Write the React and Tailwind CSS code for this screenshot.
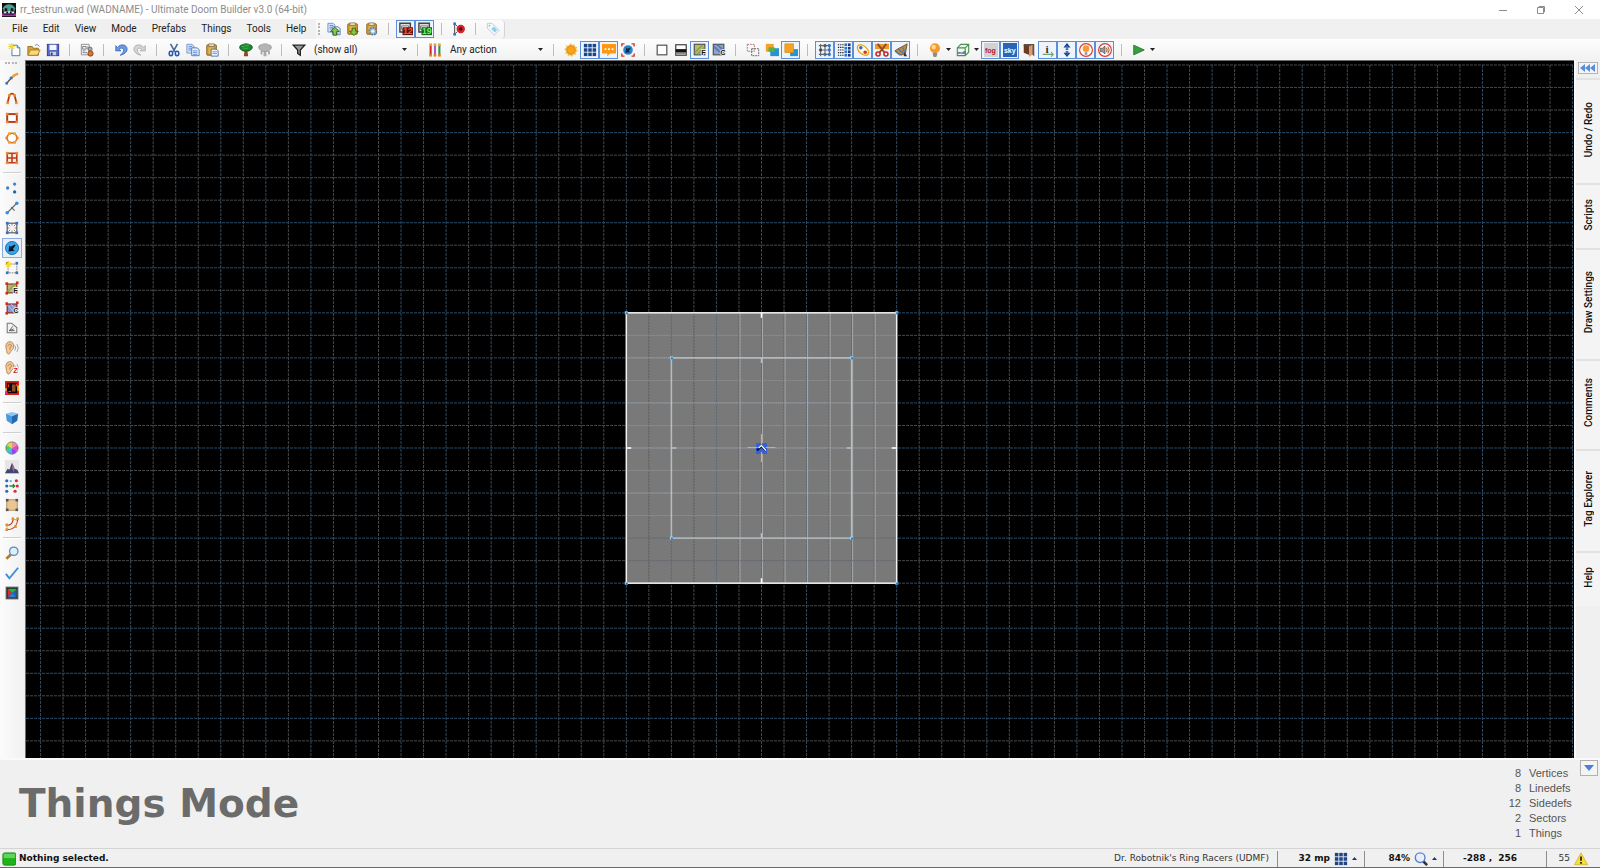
import { Fragment } from "react"

const dot = (x, y, c = "#2f74c8") => <rect key={x + "-" + y} x={x - 1.5} y={y - 1.5} width="3" height="3" fill={c} />

const corners = (c) => [dot(2.5, 2.5, c), dot(13.5, 2.5, c), dot(2.5, 13.5, c), dot(13.5, 13.5, c)]

const letters = "font-['Liberation_Sans',sans-serif] font-bold"

// small letter in the lower right corner of an icon
const mark = (letter, color = "#111") => (
  <text x="9.500" y="14" fontSize="8.500" fill={color} stroke="#fff" strokeWidth="1.500" paintOrder="stroke" className={letters}>
    {letter}
  </text>
)

const clipboard = (
  <>
    <rect x="2" y="2" width="11" height="12" rx="1" fill="#d29a34" stroke="#8a5e14" />
    <path d="M4 5h6v7H4z" fill="#e2b558" />
    <rect x="4.500" y="1" width="6" height="3" fill="#e8dcb8" stroke="#6b6250" strokeWidth=".7" />
  </>
)

const pages = (
  <>
    <path d="M1 1.500h6l2 2v8H1z" fill="#cfe0f8" stroke="#6d92c8" />
    <path d="M6.500 5.500h6l2.500 2v7H6.500z" fill="#e6f0ff" stroke="#4373b8" />
    <path d="M3 4h4M3 6h3M3 8h3M8 9h5M8 11h5M8 13h5" stroke="#5f8cd0" />
  </>
)

const ear = (
  <>
    <path d="M1 6c0-7 9-7 9 0 0 4-3 4-4 7-1 3-4 2-4-1C2 10 1 9 1 6z" fill="#f3cb9a" stroke="#a87440" strokeWidth=".9" />
    <path d="M3.500 6c0-3 4-3 4 0-1 0-2 1-2 4" fill="none" stroke="#a87440" />
    <path d="M11 5c1.500 2 1.500 4 0 6M13.500 3.500c2 3 2 6 0 9" fill="none" stroke="#999" />
  </>
)

const icons = {
  app: (
    <>
      <rect width="16" height="16" fill="#111" />
      <path d="M1 6c3-6 11-6 14 0l-1 4H2z" fill="#4c9e90" />
      <path d="M3 6h3v3H3zM10 6h3v3h-3z" fill="#15151f" />
      <path d="M2 10h3v2H2zM7 9h2v3H7zM11 10h3v2h-3z" fill="#c9e9e2" />
      <path d="M0 12h16v3H0z" fill="#c02ba8" />
      <path d="M2 13h12" stroke="#41104e" />
    </>
  ),
  file: (
    <>
      <path d="M4.500 2.500h6l3 3v9h-9z" fill="#fff" stroke="#3c6ea8" />
      <path d="M10.500 2.500v3h3" fill="#cfe0f4" stroke="#3c6ea8" />
      <path d="M4 0v8M0 4h8M1 1l6 6M7 1L1 7" stroke="#f6d838" strokeWidth="1.300" />
    </>
  ),
  open: (
    <>
      <path d="M1 14V4h5l1 2h6v8z" fill="#d9a33a" stroke="#946a18" />
      <path d="M1 14l3-6h11l-3 6z" fill="#fbd97c" stroke="#a87c22" />
      <path d="M9 3c2-2 4-1 5 1" fill="none" stroke="#4478b8" />
    </>
  ),
  save: (
    <>
      <rect x="1.500" y="1.500" width="13" height="13" fill="#5a68cc" stroke="#27388c" />
      <rect x="4" y="2" width="8" height="6" fill="#f4f7ff" />
      <rect x="4.500" y="10" width="7" height="4" fill="#c9d0dd" />
      <rect x="5.500" y="11" width="2" height="3" fill="#27388c" />
    </>
  ),
  mapOptions: (
    <>
      <path d="M1.500 1.500h9v12h-9z" fill="#f3f3f3" stroke="#888" />
      <path d="M3 4h4v3H3zM3 9h3M3 11h5M9 4v3" fill="none" stroke="#777" />
      <circle cx="11.500" cy="7" r="2.300" fill="#aaa" stroke="#666" />
      <circle cx="12" cy="12" r="3" fill="#d7772d" stroke="#833e10" />
    </>
  ),
  undo: <path d="M2 3v6h6L6 7c2-2 5-1 5 1 0 3-2 4-4 6 5-1 8-4 8-7 0-5-7-7-11-2z" fill="#6a9ae4" stroke="#2c5cae" strokeWidth=".8" />,
  redo: <path d="M14 3v6H8l2-2C8 5 5 6 5 8c0 3 2 4 4 6-5-1-8-4-8-7 0-5 7-7 11-2z" fill="#d4d4d4" stroke="#a0a0a0" strokeWidth=".8" />,
  cut: (
    <>
      <path d="M4 1l5 9M12 1L7 10" stroke="#4a6c96" strokeWidth="1.800" />
      <ellipse cx="4.500" cy="12" rx="2" ry="2.500" fill="none" stroke="#2354b0" strokeWidth="1.700" />
      <ellipse cx="11.500" cy="12" rx="2" ry="2.500" fill="none" stroke="#2354b0" strokeWidth="1.700" />
    </>
  ),
  copy: pages,
  paste: (
    <>
      {clipboard}
      <path d="M7 7h6l2 2v6H7z" fill="#edf4ff" stroke="#456ea6" />
      <path d="M8.500 10h5M8.500 12h5" stroke="#7095c8" />
    </>
  ),
  tree: (
    <>
      <path d="M6.500 8h3l1 7h-5z" fill="#8b4a1e" />
      <path d="M8 1c3 0 4 1 4 1 4 0 4 5 1 6-2 2-4 1-5 1s-3 1-5-1C0 7 0 2 4 2c0 0 1-1 4-1z" fill="#1d8a2e" stroke="#0c4f17" />
      <path d="M3 4h3M7 3h4M5 6h5" stroke="#48b64c" />
    </>
  ),
  treeOff: (
    <>
      <path d="M7 8h2l1 7H6z" fill="#aaa" />
      <path d="M8 1c3 0 4 1 4 1 4 0 4 5 1 6-2 2-4 2-5 2s-3 0-5-2C0 7 0 2 4 2c0 0 1-1 4-1z" fill="#b4b4b4" stroke="#979797" />
      <path d="M4 9v4M12.500 9v4" stroke="#a4a4a4" strokeWidth="2" />
    </>
  ),
  filter: <path d="M1.500 2.500h13L9.500 8v6l-3-2V8z" fill="#999" stroke="#222" strokeWidth="1.500" />,
  action: (
    <>
      <path d="M3 2v12" stroke="#d22d20" strokeWidth="2.400" />
      <path d="M8 2v12" stroke="#a65bc8" strokeWidth="2.400" />
      <path d="M13 2v12" stroke="#2c9444" strokeWidth="2.400" />
      {[3, 8, 13].map((x) => [dot(x, 2, "#e9a02a"), dot(x, 14, "#e07f22")])}
    </>
  ),
  sun: (
    <>
      <path d="M8 0l1.500 2.500L12 1l.5 3 3 .5-1.500 2.500 2 2-2.500 1.500.5 3-3-.5L9 16l-2-2-2.500 1.500L4 12.500l-3-.5L2.500 9 0 7l2.500-1.500L2 2.500l3 .5z" fill="#f6c65a" />
      <circle cx="8" cy="8" r="4.800" fill="#f7a418" stroke="#d98512" />
    </>
  ),
  grid: (
    <>{[1, 6, 11].map((x) => [1, 6, 11].map((y) => <rect key={x + "_" + y} x={x} y={y} width="4" height="4" fill="#1c4586" />))}</>
  ),
  comment: (
    <>
      <path d="M0 1h16v11H9l-3 3v-3H0z" fill="#ff9710" />
      <path d="M3 6h2v2H3zM7 6h2v2H7zM11 6h2v2h-2z" fill="#fff" />
    </>
  ),
  focus: (
    <>
      <path d="M1 4V1h3M12 1h3v3M15 12v3h-3M4 15H1v-3" fill="none" stroke="#cc3d35" strokeWidth="1.600" />
      <circle cx="8" cy="8" r="5.500" fill="#2b86d2" />
      <path d="M5 11l1-6 1.500 1.500L10 5l1 1-2 3 1.500 1.500z" fill="#102a48" />
    </>
  ),
  wire: <rect x="2.500" y="2.500" width="11" height="11" fill="#fff" stroke="#555" strokeWidth="1.400" />,
  bright: (
    <>
      <rect x="2" y="2" width="12" height="12" fill="#fff" stroke="#444" strokeWidth="1.400" />
      <path d="M2 7h12v4H2z" fill="#111" />
      <path d="M2 11h12v2H2z" fill="#888" />
    </>
  ),
  floorTex: (
    <>
      <rect x="1.500" y="1.500" width="12" height="12" fill="#b5bf6a" stroke="#555" strokeWidth="1.400" />
      <path d="M2 11l9-9M5 13l8-8" stroke="#8fa14c" strokeWidth="2" />
      {mark("F")}
    </>
  ),
  ceilTex: (
    <>
      <rect x="1.500" y="1.500" width="12" height="12" fill="#8ea2cc" stroke="#555" strokeWidth="1.400" />
      <path d="M2 4l10 9M6 2l8 7" stroke="#5a79b8" strokeWidth="2" />
      {mark("C")}
    </>
  ),
  mergeDotted: (
    <>
      <rect x="1.500" y="1.500" width="8" height="8" fill="none" stroke="#a66" strokeDasharray="2 1" />
      <rect x="6.500" y="6.500" width="8" height="8" fill="none" stroke="#555" strokeDasharray="2 1" />
    </>
  ),
  mergeBoth: (
    <>
      <rect x="1" y="1" width="9" height="9" fill="#f2a426" />
      <rect x="6" y="6" width="10" height="9" fill="#2793d0" />
      <path d="M4 5h7v5H4z" fill="#58ae49" />
    </>
  ),
  mergeTop: (
    <>
      <rect x="7" y="7" width="9" height="8" fill="#2793d0" />
      <rect x="1" y="1" width="10" height="10" fill="#f6a41f" stroke="#d2821a" strokeWidth=".7" />
    </>
  ),
  snap: (
    <>
      <path d="M1 3h13M1 8h13M1 13h13M3 1v14M8 1v14M13 1v14" stroke="#666" strokeWidth="1.300" />
      {[dot(8, 3, "#555"), dot(13, 3), dot(13, 8), dot(8, 13), dot(13, 13), dot(3, 8, "#444")]}
    </>
  ),
  snapDots: (
    <>
      <path d="M1 2h7M1 5h7M1 8h7M1 11h7M1 14h7" stroke="#222" strokeWidth="1.400" strokeDasharray="1.500 1" />
      {[1, 5, 9, 13].map((y) => [dot(10, y + 1), dot(14, y + 1, "#18397c")])}
    </>
  ),
  snapVerts: (
    <>
      <ellipse cx="8" cy="8" rx="7.500" ry="4.500" transform="rotate(40 8 8)" fill="#fffbe6" stroke="#efab25" strokeWidth="1.600" />
      <circle cx="5.500" cy="5.500" r="2" fill="#2e6ac8" />
      <circle cx="10.500" cy="10.500" r="2" fill="#d2331f" />
    </>
  ),
  split: (
    <>
      <path d="M0 1h16v6H0z" fill="#f0962a" />
      <path d="M3 1l8 10M13 1L5 11" stroke="#8c4a2a" strokeWidth="2" />
      <circle cx="3.500" cy="12.500" r="2.300" fill="none" stroke="#d02820" strokeWidth="1.800" />
      <circle cx="12.500" cy="12.500" r="2.300" fill="none" stroke="#d02820" strokeWidth="1.800" />
    </>
  ),
  brush: (
    <>
      <path d="M15 1l-2 11-5 2-7-5 3-2z" fill="#b98a4a" stroke="#6b4a22" />
      <path d="M5 7l6 5M10 5l2 5M2 10l5 4" stroke="#4c7fae" strokeWidth="1.500" />
      <path d="M12 10l3 5h-4z" fill="#333" />
    </>
  ),
  bulb: (
    <>
      <circle cx="8" cy="6" r="5.800" fill="#f79a2a" />
      <circle cx="6.500" cy="4.500" r="2.500" fill="#ffdba0" />
      <path d="M5.500 11h5v2l-1 3h-3l-1-3z" fill="#8d8d8d" />
    </>
  ),
  model: (
    <>
      <path d="M1.500 5.500l4-4h9v9l-4 4h-9zM1.500 5.500h9v9M10.500 5.500l4-4" fill="#eef6ee" stroke="#4a9150" strokeWidth="1.300" />
      <text x="2" y="12" fontSize="5" fill="#16418c" className={letters}>mdl</text>
    </>
  ),
  fog: (
    <>
      <rect width="16" height="16" fill="#d2d2d2" />
      <text x="1" y="11" fontSize="8" fill="#b3182c" className={letters}>fog</text>
    </>
  ),
  sky: (
    <>
      <rect width="16" height="16" fill="#2b65b8" />
      <text x="1" y="11" fontSize="8" fill="#fff" className={letters}>sky</text>
    </>
  ),
  door: (
    <>
      <path d="M2 1h12v14l-4-3V4H2z" fill="#555" />
      <path d="M2 2l7 2v10l-7-3z" fill="#6e3a22" />
      <path d="M8 4l4-2v11l-4 3z" fill="#e09a72" />
    </>
  ),
  info: (
    <>
      <path d="M2 13h12M11.500 10.500L14 13l-2.500 2.500" fill="none" stroke="#6ca86c" strokeWidth="1.300" />
      <text x="5" y="11" fontSize="13" fill="#333" className="font-['Liberation_Serif',serif] font-bold">i</text>
    </>
  ),
  height: (
    <>
      <path d="M8 0l4 5H4zM8 16l4-5H4z" fill="#1d3f80" />
      <path d="M8 3v10" stroke="#2c69b8" strokeWidth="3" strokeDasharray="2 1" />
    </>
  ),
  lightRing: (
    <>
      <circle cx="8" cy="8" r="7.300" fill="#fff" stroke="#e4392f" strokeWidth="1.300" />
      <circle cx="8" cy="6.500" r="3.800" fill="#f59a35" />
      <path d="M6.500 10.500h3v3h-3z" fill="#999" />
    </>
  ),
  soundRing: (
    <>
      <circle cx="8" cy="8" r="7.300" fill="#fff" stroke="#e4392f" strokeWidth="1.300" />
      <path d="M2.500 6h2.500L8 3.500v9L5 10H2.500z" fill="#999" stroke="#555" strokeWidth=".8" />
      <path d="M9.500 5.500c1.500 2 1.500 3 0 5M11 4c2.500 3 2.500 5 0 8" fill="none" stroke="#a86a3a" strokeWidth="1.300" />
    </>
  ),
  play: <path d="M2 2.500l12 5.500-12 5.500z" fill="#35a03f" stroke="#217529" />,
  copyUp: (
    <>
      {pages}
      <path d="M9 6l5 5h-3v4H7v-4H4z" fill="#86c93f" stroke="#315d12" />
    </>
  ),
  pasteDown: (
    <>
      {clipboard}
      <path d="M9 15.500l5-5h-3V7H7v3.500H4z" fill="#86c93f" stroke="#315d12" />
    </>
  ),
  pasteGear: (
    <>
      {clipboard}
      <circle cx="9" cy="10.500" r="4" fill="#a9c3df" stroke="#5580aa" strokeWidth="2" strokeDasharray="2 1" />
      <circle cx="9" cy="10.500" r="1.500" fill="#fff" />
    </>
  ),
  tagStart: (
    <>
      <path d="M1 1.500h12v10H1z" fill="#ddd" stroke="#444" strokeWidth="1.600" />
      <path d="M3 4.500h8v4H3z" fill="#fff" stroke="#666" />
      <rect x="4" y="6" width="12" height="9" fill="#5e140c" />
      <text x="4.500" y="14" fontSize="10" fill="#ff5636" className={letters}>12</text>
    </>
  ),
  tagEnd: (
    <>
      <path d="M1 1.500h12v10H1z" fill="#ddd" stroke="#444" strokeWidth="1.600" />
      <path d="M3 4.500h8v4H3z" fill="#fff" stroke="#666" />
      <rect x="4" y="6" width="12" height="9" fill="#14641a" />
      <text x="4.500" y="14" fontSize="10" fill="#6cf266" className={letters}>19</text>
    </>
  ),
  impassable: (
    <>
      <path d="M3 2v12M3 2l3 3M3 14l3-3" fill="none" stroke="#333" />
      <circle cx="10" cy="8" r="4.800" fill="#d5222a" />
      <circle cx="10" cy="8" r="2" fill="#4b0a10" />
      {[dot(3, 2), dot(3, 14)]}
    </>
  ),
  tag: (
    <>
      <path d="M1.500 1.500H7l8 8-5.500 5.500-8-8z" fill="#f4f8fa" stroke="#c0c8ce" />
      <path d="M6 8l3-3 4 4-3 3z" fill="#8ccdf0" />
      <circle cx="4" cy="4" r="1" fill="#aaa" />
    </>
  ),
  drawLines: (
    <>
      <path d="M2 14l5-6 7-5" fill="none" stroke="#7b4a2c" strokeWidth="1.500" />
      <path d="M7 9l3-4 5-2" fill="none" stroke="#f0a133" strokeWidth="2.600" />
      {[dot(2, 14), dot(7, 8)]}
    </>
  ),
  drawCurve: (
    <>
      <path d="M3 13.500l2-8.500c2-2.500 4-2.500 6 0l2 8.500" fill="none" stroke="#b9331f" strokeWidth="2" />
      {[dot(3, 13.5, "#f0902a"), dot(13, 13.5, "#f0902a"), dot(5, 5, "#f0902a"), dot(11, 5, "#f0902a")]}
    </>
  ),
  drawRect: (
    <>
      <rect x="2.500" y="3.500" width="11" height="9" fill="#fff" stroke="#b8391f" strokeWidth="2.200" />
      {[dot(2.5, 3.5, "#ee8a28"), dot(13.5, 3.5, "#ee8a28"), dot(2.5, 12.5, "#ee8a28"), dot(13.5, 12.5, "#ee8a28")]}
    </>
  ),
  drawEllipse: (
    <>
      <circle cx="8" cy="8" r="5.500" fill="#fff" stroke="#d0682a" strokeWidth="1.800" />
      {[dot(5, 3, "#f2a033"), dot(11, 3, "#f2a033"), dot(14, 8, "#e88422"), dot(11, 13, "#f2a033"), dot(5, 13, "#f2a033"), dot(2, 8, "#e88422")]}
    </>
  ),
  drawGrid: (
    <>
      <path d="M2.500 2.500h11v11h-11zM8 2v12M2 8h12" fill="#ffe8d8" stroke="#bb3a22" strokeWidth="1.800" />
      {corners("#ee8a28")}
    </>
  ),
  vertices: (
    <>
      <circle cx="3" cy="8" r="1.900" fill="#3f7fd4" />
      <circle cx="11" cy="3.500" r="1.900" fill="#3f7fd4" />
      <circle cx="11" cy="12.500" r="1.900" fill="#2a5fb4" />
    </>
  ),
  linedefs: (
    <>
      <path d="M2 14L14 2M7 7l4 4" stroke="#666" strokeWidth="1.300" />
      <circle cx="2.500" cy="13.500" r="2" fill="#3f8ae0" />
      <circle cx="13.500" cy="2.500" r="2" fill="#3f8ae0" />
    </>
  ),
  sectors: (
    <>
      <rect x="2.500" y="2.500" width="11" height="11" fill="#f5f5f5" stroke="#555" strokeWidth="1.300" />
      <path d="M8 3v2M8 11v2M3 8h2M11 8h2M4 4l2 2M12 4l-2 2M4 12l2-2M12 12l-2-2" stroke="#777" />
      {corners()}
    </>
  ),
  things: (
    <>
      <circle cx="8" cy="8" r="7.500" fill="#38a4ea" stroke="#1c6fb6" />
      <path d="M4 12l1-7 1.500 1.500L11 4l1 1-3 4 2 2z" fill="#0b1725" />
    </>
  ),
  makeSector: (
    <>
      <rect x="3.500" y="3.500" width="10" height="10" fill="#f7f7f7" stroke="#777" strokeDasharray="2 1" />
      {corners()}
      <path d="M4 0v8M0 4h8M1.500 1.500l5 5M6.500 1.500l-5 5" stroke="#f8d638" strokeWidth="1.400" />
    </>
  ),
  floorAlign: (
    <>
      <rect x="2.500" y="3.500" width="11" height="10" fill="#b9b868" stroke="#8a4a28" strokeWidth="1.500" />
      <path d="M3 12l8-8" stroke="#8da454" strokeWidth="2" />
      {[dot(2, 14, "#d8281c"), dot(2, 3, "#d8281c"), dot(14, 2, "#d8281c")]}
      {mark("F")}
    </>
  ),
  ceilAlign: (
    <>
      <rect x="2.500" y="3.500" width="11" height="10" fill="#8497cc" stroke="#8a3438" strokeWidth="1.500" />
      <path d="M3 5l8 8M7 4l6 6" stroke="#a7b4da" strokeWidth="1.500" />
      {[dot(2, 14, "#d8281c"), dot(2, 3, "#d8281c"), dot(14, 2, "#d8281c")]}
      {mark("C")}
    </>
  ),
  visplane: (
    <>
      <path d="M2.500 13.500v-11h5l6 5v6z" fill="#f2f2f2" stroke="#777" strokeWidth="1.200" />
      <path d="M5 11l4-5M5 11h6M5 11l5-2" stroke="#555" />
    </>
  ),
  ear,
  earZ: (
    <>
      {ear}
      {mark("Z", "#c51a2a")}
    </>
  ),
  automap: (
    <>
      <rect x="1" y="1" width="14" height="14" fill="#160505" stroke="#e1241c" strokeWidth="2" />
      <path d="M4 4v3M13 3v3M4 12h3" fill="none" stroke="#e8411c" strokeWidth="1.300" />
      <path d="M8 4h4v8H8z" fill="#8a5230" />
      <path d="M0 8h2v4H0zM14 5h2v6h-2z" fill="#f2ba22" />
      <path d="M0 12h3v3H0z" fill="#d22cc4" />
    </>
  ),
  cube: (
    <>
      <path d="M8 1l7 2-7 3-7-3z" fill="#8ac6f4" />
      <path d="M1 3l7 3v9l-6-4z" fill="#4a98dc" />
      <path d="M8 6l7-3-1 8-6 4z" fill="#2468b4" />
    </>
  ),
  colors: (
    <>
      <path d="M8 8V1a7 7 0 016 3.500z" fill="#f58a9c" />
      <path d="M8 8l6-3.500a7 7 0 010 7z" fill="#e93fc0" />
      <path d="M8 8l6 3.500A7 7 0 018 15z" fill="#8c4af0" />
      <path d="M8 8v7a7 7 0 01-6-3.500z" fill="#36b9f2" />
      <path d="M8 8l-6 3.500a7 7 0 010-7z" fill="#3fd65a" />
      <path d="M8 8L2 4.500A7 7 0 018 1z" fill="#e7d53a" />
      <circle cx="8" cy="8" r="7" fill="none" stroke="#777" />
    </>
  ),
  terrain: (
    <>
      <rect width="16" height="16" fill="#e6e6e6" />
      <path d="M0 15l3-5 2 1 3-8 3 7 3 1 2 4z" fill="#3f4672" />
      <path d="M9 5l2 5-1 4-2-5z" fill="#a46c84" />
    </>
  ),
  tagMatch: (
    <>
      {[2, 8, 14].map((y) => <circle key={y} cx="2" cy={y} r="1.800" fill="#2a6ab8" />)}
      <circle cx="6.500" cy="2.500" r="1.300" fill="#7aa6d8" />
      <path d="M5 8h6M9 6l2 2-2 2" fill="none" stroke="#2b8a34" strokeWidth="1.600" />
      {[[13, 2], [14, 8], [11.5, 14]].map(([x, y]) => <circle key={x} cx={x} cy={y} r="1.800" fill="#d8283a" />)}
    </>
  ),
  texture: (
    <>
      <rect x="2" y="2" width="12" height="12" fill="#e9c694" stroke="#b08a58" />
      {corners("#555")}
    </>
  ),
  stairs: (
    <>
      <path d="M2 12c6 0 9-3 10-9" fill="none" stroke="#b03524" strokeWidth="6.500" />
      <path d="M2.500 12c5.500 0 8.500-3 9.500-8.500" fill="none" stroke="#f8f0e4" strokeWidth="4" />
      {[dot(2, 9, "#e88e22"), dot(9, 2, "#e88e22"), dot(14.5, 2, "#e88e22"), dot(12, 11, "#e88e22"), dot(2, 14.5, "#e88e22")]}
    </>
  ),
  search: (
    <>
      <path d="M1.500 14.500L7 9.500" stroke="#b9772e" strokeWidth="3" />
      <circle cx="10" cy="6" r="4.800" fill="#dcefff" stroke="#6488ae" strokeWidth="1.500" />
    </>
  ),
  check: <path d="M1 9l4 5L15 2" fill="none" stroke="#3f8edc" strokeWidth="2.200" />,
  images: (
    <>
      <rect x="1.500" y="1.500" width="13" height="13" fill="#222" stroke="#555" strokeWidth="1.500" />
      <path d="M3 3h10v10z" fill="#2bb24a" />
      <path d="M3 3l5 5-5 5z" fill="#d43030" />
      <path d="M13 4v9L8 8z" fill="#2a56d4" />
      <path d="M3 13l5-5 5 5z" fill="#2f7fd0" />
    </>
  ),
  zoom: (
    <>
      <path d="M10 10l5 5" stroke="#333" strokeWidth="3" />
      <circle cx="7" cy="6.500" r="5.500" fill="#e6f0ff" stroke="#5a7fd0" strokeWidth="1.600" />
    </>
  ),
  ready: (
    <>
      <rect x="1" y="1" width="15" height="14" rx="2" fill="#1cb417" stroke="#148c12" />
      <path d="M2 2h13v5H2z" fill="#5fd65a" />
    </>
  ),
  warning: (
    <>
      <path d="M8 1l7.500 13.500H.5z" fill="#f8de2e" stroke="#d0b83c" />
      <path d="M8 5v5M8 11.500v2" stroke="#222" strokeWidth="2" />
    </>
  ),
}

function Icon({ name }) {
  return (
    <svg viewBox="0 0 16 16" className="h-[14px] w-[14px] shrink-0" aria-hidden="true">
      {icons[name]}
    </svg>
  )
}

// Top toolbar. "|" is a separator, "*" marks a pressed toggle, "v" a dropdown arrow
const leftGroup = ["file", "open", "save", "|", "mapOptions", "|", "undo", "redo", "|", "cut", "copy", "paste", "|", "tree", "treeOff", "|", "filter"]
const rightGroup = [
  "sun", "*grid", "*comment", "focus", "|",
  "wire", "bright", "*floorTex", "ceilTex", "|",
  "mergeDotted", "mergeBoth", "*mergeTop", "|",
  "*snap", "*snapDots", "*snapVerts", "*split", "*brush", "|",
  "bulb", "v", "model", "v", "*fog", "*sky", "door", "*info", "*height", "*lightRing", "*soundRing", "|",
  "play", "v",
]
const menuGroup = ["copyUp", "pasteDown", "pasteGear", "|", "*tagStart", "*tagEnd", "|", "impassable", "|", "tag"]

const menus = ["File", "Edit", "View", "Mode", "Prefabs", "Things", "Tools", "Help"]

const sideGroups = [
  { slot: "h-5", items: ["drawLines", "drawCurve", "drawRect", "drawEllipse", "drawGrid"] },
  { slot: "h-5", items: ["vertices", "linedefs", "sectors", "*things", "makeSector", "floorAlign", "ceilAlign", "visplane", "ear", "earZ", "automap"] },
  { slot: "h-5", items: ["cube"] },
  { slot: "h-[19px]", items: ["colors", "terrain", "tagMatch", "texture", "stairs"] },
  { slot: "h-5", items: ["search", "check", "images"] },
]

const dockTabs = [
  { label: "Undo / Redo", size: "h-[105px]" },
  { label: "Scripts", size: "h-[65px]" },
  { label: "Draw Settings", size: "h-[111px]" },
  { label: "Comments", size: "h-[90px]" },
  { label: "Tag Explorer", size: "h-[102px]" },
  { label: "Help", size: "h-[55px]" },
]

const stats = [
  [8, "Vertices"],
  [8, "Linedefs"],
  [12, "Sidedefs"],
  [2, "Sectors"],
  [1, "Things"],
]

function ToolStrip({ items }) {
  return items.map((item, i) => {
    if (item === "|") return <span key={i} className="mx-[7px] h-3 w-px shrink-0 bg-[#bdbdbd]" />
    if (item === "v") return <Arrow key={i} />
    const on = item[0] === "*"
    const name = on ? item.slice(1) : item
    return (
      <button
        key={i}
        aria-label={name}
        aria-pressed={on}
        className={`flex h-[18px] w-[19px] shrink-0 items-center justify-center ${on ? "border border-[#5b8fda] bg-[#eef4fc]" : ""}`}
      >
        <Icon name={name} />
      </button>
    )
  })
}

function Arrow() {
  return (
    <span className="flex w-[9px] shrink-0 justify-center">
      <svg viewBox="0 0 5 3" className="h-[3px] w-[5px]" aria-hidden="true">
        <path d="M0 0h5L2.500 3z" fill="#222" />
      </svg>
    </span>
  )
}

function Combo({ label, value }) {
  return (
    <div className="relative ml-[3px] flex w-[99px] items-center">
      <select aria-label={label} className="h-[18px] w-full appearance-none bg-transparent pl-[3px] text-[10px] text-[#222] outline-none">
        <option>{value}</option>
      </select>
      <span className="pointer-events-none absolute right-px">
        <Arrow />
      </span>
    </div>
  )
}

const STEP = 22.53
const CX = 735.5
const CY = 387

function range(a, b) {
  return Array.from({ length: b - a + 1 }, (_, i) => a + i)
}

function MapView() {
  const at = (k) => CX + k * STEP
  const row = (k) => CY + k * STEP
  const color = (k) => (k % 2 === 0 ? "#2a4c68" : "#484848")
  const x0 = at(-6)
  const y0 = row(-6)
  const size = STEP * 12
  const ix = at(-4)
  const iy = row(-4)
  const inner = STEP * 8

  return (
    <svg className="absolute inset-0 h-full w-full" role="img" aria-label="Map">
      {range(-32, 120).map((k) => (
        <line key={"v" + k} x1={at(k)} x2={at(k)} y1="4" y2="100%" stroke={color(k)} strokeDasharray="3 1" />
      ))}
      {range(-17, 80).map((k) => (
        <line key={"h" + k} x1="0" x2="100%" y1={row(k)} y2={row(k)} stroke={color(k)} strokeDasharray="3 1" />
      ))}

      <rect x={x0} y={y0} width={size} height={size} fill="#797979" />
      {range(-5, 5).map((k) => (
        <Fragment key={k}>
          <line x1={at(k)} x2={at(k)} y1={y0} y2={y0 + size} stroke={k % 2 ? "#5a5a5a" : "#566a7c"} strokeDasharray="2 1" />
          <line
            x1={x0}
            x2={x0 + size}
            y1={row(k)}
            y2={row(k)}
            stroke={k > 3 ? "#5a626a" : k % 2 ? "#9a9a9a" : "#acb8c2"}
            strokeDasharray="1 1"
          />
          {k > -2 && <line x1={at(k) + 1} x2={at(k) + 1} y1={y0} y2={y0 + size} stroke="#a3a8aa" />}
        </Fragment>
      ))}

      <rect x={ix} y={iy} width={inner} height={inner} fill="none" stroke="#b7bfc2" strokeWidth="1.500" />
      <path d={`M${CX} ${iy}v5M${CX} ${iy + inner}v-5M${ix} ${CY}h5M${ix + inner} ${CY}h-5`} stroke="#b7bfc2" strokeWidth="1.500" />
      <rect x={x0} y={y0} width={size} height={size} fill="none" stroke="#f2f2f2" strokeWidth="1.500" />
      <path d={`M${CX} ${y0}v5M${CX} ${y0 + size}v-5M${x0} ${CY}h5M${x0 + size} ${CY}h-5`} stroke="#fff" strokeWidth="1.500" />
      {[6, 4].map((k) =>
        [[-k, -k], [k, -k], [-k, k], [k, k]].map(([a, b]) => (
          <g key={a + "," + b}>
            <rect x={at(a) - 1.5} y={row(b) - 1.5} width="3" height="3" fill="#9ed6f5" />
            <rect x={at(a) - 0.5} y={row(b) - 0.5} width="2" height="2" fill="#1479d0" />
          </g>
        ))
      )}

      <rect x={CX - 5.5} y={CY - 5} width="11" height="11" fill="#3563d4" />
      <path d={`M${CX} ${CY - 14}v28M${CX - 14} ${CY - 0.5}h28`} stroke="#eba755" strokeWidth="1.200" />
      <rect x={CX - 4} y={CY - 3} width="8" height="7" fill="#3563d4" />
      <path d={`M${CX - 4.5} ${CY + 2.5}l4.500-4.500 4.500 4.500`} fill="none" stroke="#0a1240" strokeWidth="2.400" />
      <path d={`M${CX - 3} ${CY}l3-2.500 4.500 5`} fill="none" stroke="#fff" strokeWidth="1.300" />
    </svg>
  )
}

function Divider() {
  return <span className="h-4 w-px bg-[#8d8d8d]" />
}

function UpArrow() {
  return (
    <svg viewBox="0 0 5 3" className="h-[3px] w-[5px]" aria-hidden="true">
      <path d="M0 3h5L2.500 0z" fill="#1d3570" />
    </svg>
  )
}

export default function App() {
  return (
    <div className="flex h-screen flex-col overflow-hidden bg-[#f0f0f0] font-[Roboto,sans-serif] text-[10px] text-[#222]">
      <header className="flex h-[19px] shrink-0 items-center bg-white pl-[2px]">
        <Icon name="app" />
        <h1 className="ml-1 flex-1 text-[10px] leading-[18px] text-[#8c8c8c]">rr_testrun.wad (WADNAME) - Ultimate Doom Builder v3.0 (64-bit)</h1>
        <div className="flex text-[#8c8c8c]">
          <button aria-label="Minimize" className="flex w-[38px] justify-center">
            <svg viewBox="0 0 10 10" className="h-[10px] w-[10px]"><path d="M1 5.500h8" stroke="currentColor" /></svg>
          </button>
          <button aria-label="Restore" className="flex w-[38px] justify-center">
            <svg viewBox="0 0 10 10" className="h-[10px] w-[10px]" fill="none" stroke="currentColor"><path d="M1.500 2.500h6v6h-6zM3 2.500v-1h5.500V7H8" /></svg>
          </button>
          <button aria-label="Close" className="mr-[2px] flex w-[38px] justify-center">
            <svg viewBox="0 0 10 10" className="h-[10px] w-[10px]"><path d="M1 1l8 8M9 1L1 9" stroke="currentColor" /></svg>
          </button>
        </div>
      </header>

      <div className="flex h-5 shrink-0 items-center pl-3">
        <nav className="flex gap-[15px]">
          {menus.map((m) => (
            <button key={m} className="leading-5">{m}</button>
          ))}
        </nav>
        <div className="ml-[10px] flex h-[19px] items-center rounded-r border-r border-[#d5d5d5] bg-gradient-to-b from-[#fcfcfc] to-[#f3f3f3] pr-[2px]">
          <span className="mr-1 ml-[2px] h-3 w-[2px] border-l-2 border-dotted border-[#b5b5b5]" />
          <ToolStrip items={menuGroup} />
        </div>
      </div>

      <div className="flex h-[21px] shrink-0 items-center bg-gradient-to-b from-[#fdfdfd] to-[#f2f2f2] pl-[5px]">
        <ToolStrip items={leftGroup} />
        <Combo label="Things filter" value="(show all)" />
        <ToolStrip items={["|", "action"]} />
        <Combo label="Linedef action" value="Any action" />
        <ToolStrip items={["|", ...rightGroup]} />
      </div>

      <div className="flex min-h-0 flex-1">
        <aside className="flex w-[25px] shrink-0 flex-col bg-gradient-to-r from-[#fcfcfc] to-[#f0f0f0] pt-[2px]">
          <span className="mb-1 ml-[5px] h-[2px] w-3 border-t-2 border-dotted border-[#b5b5b5]" />
          {sideGroups.map((g, i) => (
            <Fragment key={i}>
              {i > 0 && <span className="my-1 ml-[3px] h-[2px] w-[18px] border-t border-[#cfcfcf] bg-white" />}
              {g.items.map((item) => {
                const on = item[0] === "*"
                const name = on ? item.slice(1) : item
                return (
                  <button
                    key={name}
                    aria-label={name}
                    aria-pressed={on}
                    className={`ml-[2px] flex w-5 items-center justify-center ${g.slot} ${on ? "border border-[#8eaee0] bg-[#e8eefa]" : ""}`}
                  >
                    <Icon name={name} />
                  </button>
                )
              })}
            </Fragment>
          ))}
        </aside>

        <main className="relative min-w-0 flex-1 overflow-hidden border-t border-l border-[#6e6e6e] bg-black">
          <MapView />
        </main>

        <aside className="flex w-[26px] shrink-0 flex-col border-l-2 border-[#fafafa] pt-[2px]">
          <button aria-label="Expand" className="mb-1 ml-[2px] flex h-3 w-5 items-center justify-center border border-[#b5b5b5] bg-[#f4f4f4]">
            <svg viewBox="0 0 16 8" className="h-2 w-4"><path d="M5 0v8L0 4zM10 0v8L5 4zM15 0v8l-5-4z" fill="#5a8bde" /></svg>
          </button>
          {dockTabs.map((t) => (
            <button key={t.label} className={`flex items-center justify-center border-t-2 border-[#e2e2e2] bg-[#f4f4f4] pb-1 pl-[2px] text-[10px] font-medium text-[#111] ${t.size}`}>
              <span className="rotate-180 leading-4 [writing-mode:vertical-rl]">{t.label}</span>
            </button>
          ))}
        </aside>
      </div>

      <section className="flex h-[90px] shrink-0 border-t-2 border-[#fafafa]">
        <h2 className="flex-1 pt-1 pl-[19px] font-['DejaVu_Sans',sans-serif] text-[39px] leading-[80px] font-bold text-[#6b6b6b]">Things Mode</h2>
        <table className="mt-[6px] mr-2 h-[75px] w-20 table-fixed font-['Liberation_Sans',sans-serif] text-[11px] leading-[15px] text-[#555]">
          <tbody>
            {stats.map(([n, label]) => (
              <tr key={label}>
                <td className="w-[29px] p-0 text-right">{n}</td>
                <td className="p-0 pl-2">{label}</td>
              </tr>
            ))}
          </tbody>
        </table>
        <button aria-label="Collapse panel" className="mr-[2px] flex h-4 w-[18px] items-center justify-center border border-[#b0b0b0] bg-[#f4f4f4]">
          <svg viewBox="0 0 10 6" className="h-[6px] w-[10px]"><path d="M0 0h10L5 6z" fill="#4b7fdb" /></svg>
        </button>
      </section>

      <footer className="flex h-5 shrink-0 items-center border-t border-b border-t-[#d4d4d4] border-b-[#6a6a6a] pt-px pr-3 pl-[2px] font-['DejaVu_Sans',sans-serif] text-[9px] text-[#111]">
        <Icon name="ready" />
        <span className="ml-[3px] flex-1 font-bold">Nothing selected.</span>
        <span className="mr-2 text-[#333]">Dr. Robotnik's Ring Racers (UDMF)</span>
        <Divider />
        <button className="flex w-[86px] items-center justify-end gap-1 pr-[7px] font-bold">
          32 mp <Icon name="grid" /> <UpArrow />
        </button>
        <Divider />
        <button className="flex w-[78px] items-center justify-end gap-1 pr-[6px] font-bold">
          84% <Icon name="zoom" /> <UpArrow />
        </button>
        <Divider />
        <span className="w-[102px] pl-[19px] font-bold whitespace-pre">-288 ,  256</span>
        <Divider />
        <button className="flex w-[41px] items-center justify-end gap-1 text-[#333]">
          55 <Icon name="warning" />
        </button>
      </footer>
    </div>
  )
}
